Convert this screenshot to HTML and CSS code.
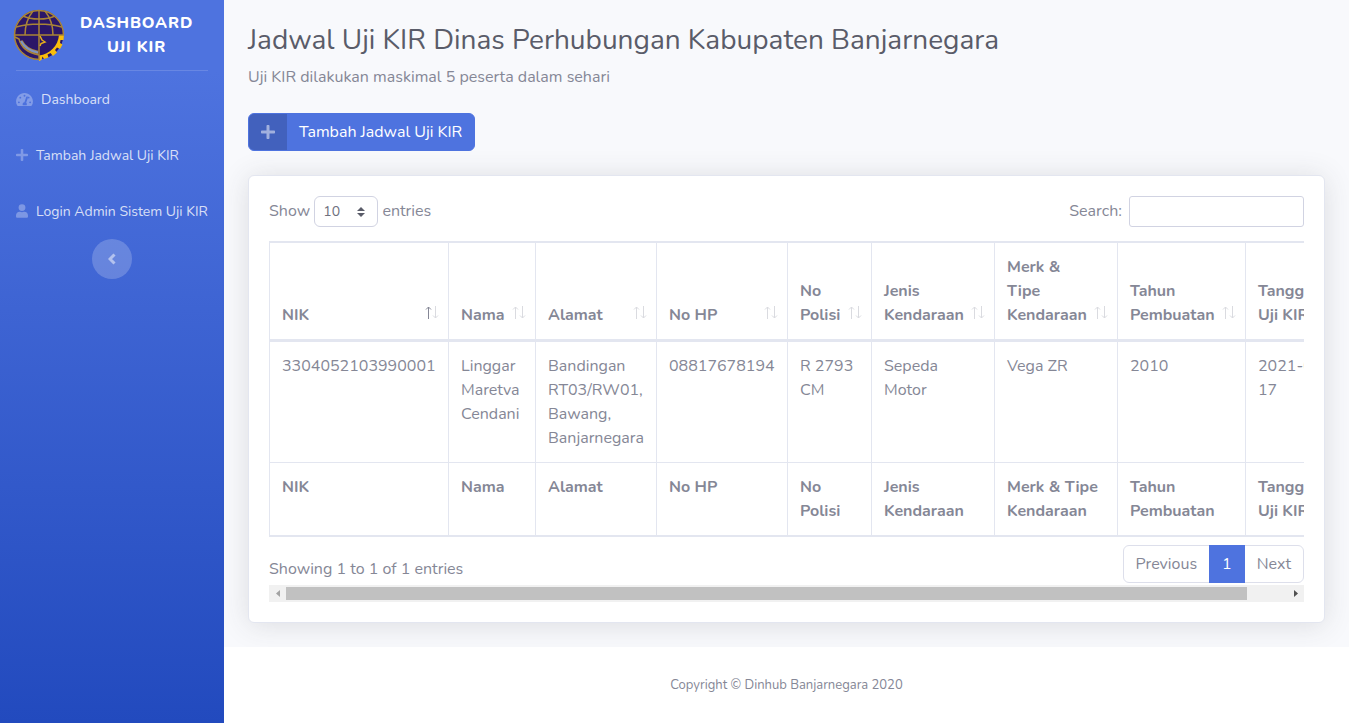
FILE: index.html
```html
<!DOCTYPE html>
<html lang="id">
<head>
<meta charset="utf-8">
<meta name="viewport" content="width=device-width, initial-scale=1">
<title>Dashboard Uji KIR</title>
<link rel="stylesheet" href="styles.css">
</head>
<body>
<svg class="defs" aria-hidden="true">
  <symbol id="plus" viewBox="0 0 448 512"><path d="M416 208H272V64c0-17.670-14.330-32-32-32h-32c-17.670 0-32 14.330-32 32v144H32c-17.670 0-32 14.330-32 32v32c0 17.670 14.330 32 32 32h144v144c0 17.670 14.330 32 32 32h32c17.670 0 32-14.330 32-32V304h144c17.670 0 32-14.330 32-32v-32c0-17.670-14.330-32-32-32z"/></symbol>
</svg>
<div class="wrapper">
  <nav class="sidebar">
    <a class="brand" href="#">
      <svg class="logo" viewBox="0 0 52 52" aria-hidden="true">
        <circle cx="26" cy="25.500" r="24.500" fill="#2b1667"/>
        <path d="M26 52V46.500C37 45 45 37 46 26H51L50.500 31L47.500 31L47 34L49.500 35.500L47 40L44 38.500L42 41L44 43.500L40 47L37.500 44L34.500 45.500L35.500 48.500L31 50L29.500 47.500L28.500 51Z" fill="#f9bd0b"/>
        <g fill="none" stroke="#a98436" stroke-width="1.500">
          <path d="M1.500 26A24.500 24.500 0 0 1 50.500 26M1.500 26A24.500 24.500 0 0 0 26 50.500"/>
          <path d="M1 26H51M26 1V51M12 26C12 16 16 7 20 2M40 26C40 16 36 7 32 2M10 7C18 11 34 11 42 7M3 18C17 14 35 14 49 18"/>
          <path d="M2 28L6 30C8 38 15 44 26 46"/>
        </g>
        <path d="M8 32C11 38 17 42 25 43.500" fill="none" stroke="#ad8337" stroke-width="3.500"/>
        <path d="M8 32C11 38 17 42 25 43.500" fill="none" stroke="#7c93c4" stroke-width="2"/>
        <path d="M27 27L29 31L32 33L28 34.500L27 37" fill="none" stroke="#e5ad1c" stroke-width="1.500"/>
      </svg>
      <span class="brand-text">DASHBOARD UJI KIR</span>
    </a>
    <hr class="divider">
    <ul class="menu">
      <li><a href="#"><svg class="gauge" viewBox="0 0 576 512" aria-hidden="true"><path fill-rule="evenodd" d="M288 32C129 32 0 161 0 320c0 53 14 102 39 145 6 9 16 15 27 15h444c11 0 21-6 27-15 25-43 39-92 39-145C576 161 447 32 288 32zm0 64a32 32 0 1 1 0 64 32 32 0 0 1 0-64zM96 384a32 32 0 1 1 0-64 32 32 0 0 1 0 64zm48-160a32 32 0 1 1 0-64 32 32 0 0 1 0 64zm247-67a24 24 0 0 1 15 30l-61 184c14 12 23 29 23 45 0 12-3 22-9 32H233c-6-10-9-20-9-32 0-35 29-64 62-64l61-184c5-13 31-15 44-11zm9 50a32 32 0 1 1 28 17c-12 0-22-7-28-17zM480 384a32 32 0 1 1 0-64 32 32 0 0 1 0 64z"/></svg>Dashboard</a></li>
      <li><a href="#"><svg viewBox="0 0 448 512" aria-hidden="true"><use href="#plus"/></svg>Tambah Jadwal Uji KIR</a></li>
      <li><a href="#"><svg viewBox="0 0 448 512" aria-hidden="true"><path d="M224 256a128 128 0 1 0 0-256 128 128 0 0 0 0 256zm90 32h-17a174 174 0 0 1-146 0h-17C60 288 0 348 0 422v42c0 27 21 48 48 48h352c27 0 48-21 48-48v-42c0-74-60-134-134-134z"/></svg>Login Admin Sistem Uji KIR</a></li>
    </ul>
    <button class="toggle" type="button" aria-label="Ciutkan menu"><svg viewBox="0 0 8 12" aria-hidden="true"><path d="M6.500 1.500L2 6L6.500 10.500" fill="none" stroke="currentColor" stroke-width="3"/></svg></button>
  </nav>
  <div class="page">
    <main>
      <h1>Jadwal Uji KIR Dinas Perhubungan Kabupaten Banjarnegara</h1>
      <p class="lead">Uji KIR dilakukan maskimal 5 peserta dalam sehari</p>
      <a class="add" href="#"><span class="add-icon"><svg viewBox="0 0 448 512" aria-hidden="true"><use href="#plus"/></svg></span><span class="add-text">Tambah Jadwal Uji KIR</span></a>
      <section class="card">
        <div class="scroller">
          <div class="tools">
            <label>Show <select><option>10</option><option>25</option><option>50</option><option>100</option></select> entries</label>
            <label class="search">Search: <input type="search"></label>
          </div>
          <table>
            <colgroup><col class="c-nik"><col class="c-nama"><col class="c-alamat"><col class="c-hp"><col class="c-polisi"><col class="c-jenis"><col class="c-merk"><col class="c-tahun"><col class="c-tanggal"></colgroup>
            <thead><tr>
              <th class="sorted"><div>NIK<svg viewBox="0 0 14 13"><path class="up" d="M3.500 13V1M1 3.500L3.500 1L6 3.500"/><path d="M10.500 0V12M8 9.500L10.500 12L13 9.500"/></svg></div></th>
              <th><div>Nama<svg viewBox="0 0 14 13"><path d="M3.500 13V1M1 3.500L3.500 1L6 3.500M10.500 0V12M8 9.500L10.500 12L13 9.500"/></svg></div></th>
              <th><div>Alamat<svg viewBox="0 0 14 13"><path d="M3.500 13V1M1 3.500L3.500 1L6 3.500M10.500 0V12M8 9.500L10.500 12L13 9.500"/></svg></div></th>
              <th><div>No HP<svg viewBox="0 0 14 13"><path d="M3.500 13V1M1 3.500L3.500 1L6 3.500M10.500 0V12M8 9.500L10.500 12L13 9.500"/></svg></div></th>
              <th><div>No Polisi<svg viewBox="0 0 14 13"><path d="M3.500 13V1M1 3.500L3.500 1L6 3.500M10.500 0V12M8 9.500L10.500 12L13 9.500"/></svg></div></th>
              <th><div>Jenis Kendaraan<svg viewBox="0 0 14 13"><path d="M3.500 13V1M1 3.500L3.500 1L6 3.500M10.500 0V12M8 9.500L10.500 12L13 9.500"/></svg></div></th>
              <th><div>Merk &amp; Tipe Kendaraan<svg viewBox="0 0 14 13"><path d="M3.500 13V1M1 3.500L3.500 1L6 3.500M10.500 0V12M8 9.500L10.500 12L13 9.500"/></svg></div></th>
              <th><div>Tahun Pembuatan<svg viewBox="0 0 14 13"><path d="M3.500 13V1M1 3.500L3.500 1L6 3.500M10.500 0V12M8 9.500L10.500 12L13 9.500"/></svg></div></th>
              <th><div>Tanggal Uji KIR<svg viewBox="0 0 14 13"><path d="M3.500 13V1M1 3.500L3.500 1L6 3.500M10.500 0V12M8 9.500L10.500 12L13 9.500"/></svg></div></th>
            </tr></thead>
            <tbody><tr>
              <td>3304052103990001</td><td>Linggar Maretva Cendani</td><td>Bandingan RT03/RW01, Bawang, Banjarnegara</td><td>08817678194</td><td>R 2793 CM</td><td>Sepeda Motor</td><td>Vega ZR</td><td>2010</td><td>2021-08-17</td>
            </tr></tbody>
            <tfoot><tr>
              <th>NIK</th><th>Nama</th><th>Alamat</th><th>No HP</th><th>No Polisi</th><th>Jenis Kendaraan</th><th>Merk &amp; Tipe Kendaraan</th><th>Tahun Pembuatan</th><th>Tanggal Uji KIR</th>
            </tr></tfoot>
          </table>
          <div class="summary">
            <span>Showing 1 to 1 of 1 entries</span>
            <div class="pager"><a href="#">Previous</a><a class="current" href="#">1</a><a href="#">Next</a></div>
          </div>
        </div>
        <div class="scrollbar" aria-hidden="true">
          <svg class="back" viewBox="0 0 17 17"><path d="M11 5V12L7 8.500Z"/></svg>
          <div class="track"><div class="thumb"></div></div>
          <svg viewBox="0 0 17 17"><path d="M7 5V12L11 8.500Z"/></svg>
        </div>
      </section>
    </main>
    <footer>Copyright © Dinhub Banjarnegara 2020</footer>
  </div>
</div>
</body>
</html>
```
FILE: styles.css
```css
*, *::before, *::after { box-sizing: border-box; }
body {
  margin: 0;
  font: 400 16px/24px Nunito, Lato, "Open Sans", sans-serif;
  color: #858796;
  background: #fff;
}
a { text-decoration: none; color: inherit; }
svg { fill: currentColor; }
.defs { position: absolute; width: 0; height: 0; }
.wrapper { display: flex; min-height: 100vh; }

.sidebar {
  flex: 0 0 224px;
  display: flex;
  flex-direction: column;
  align-items: stretch;
  color: #fff;
  background: linear-gradient(180deg, #4e73df 10%, #224abe 100%);
}
.brand {
  display: flex;
  align-items: center;
  height: 70px;
  padding: 0 16px 0 13px;
  font-weight: 800;
  text-align: center;
}
.logo { flex: none; width: 52px; height: 52px; }
.brand-text { flex: 1; padding: 0 14px; letter-spacing: 0.8px; }
.divider { width: 192px; margin: 0 16px; border: 0; border-top: 1px solid rgba(255, 255, 255, 0.15); }
.menu { list-style: none; margin: 0; padding: 0; }
.menu a {
  display: flex;
  align-items: center;
  gap: 8px;
  padding: 17px 16px 15px;
  font-size: 14px;
  white-space: nowrap;
  color: rgba(255, 255, 255, 0.8);
}
.menu svg { flex: none; width: 12px; height: 14px; margin-bottom: 2px; color: rgba(255, 255, 255, 0.3); }
.menu .gauge { width: 17px; height: 15px; }
.toggle {
  align-self: center;
  display: grid;
  place-items: center;
  width: 40px;
  height: 40px;
  padding: 0;
  border: 0;
  border-radius: 50%;
  color: rgba(255, 255, 255, 0.5);
  background: rgba(255, 255, 255, 0.2);
}
.toggle svg { width: 8px; height: 12px; }

.page { flex: 1; min-width: 0; display: flex; flex-direction: column; background: #f8f9fc; }
main { flex: 1; padding: 24px; }
h1 { margin: 0 0 8px; font-size: 28px; line-height: 33px; font-weight: 400; color: #5a5c69; }
.lead { margin: 0 0 24px; }
.add {
  display: inline-flex;
  vertical-align: top;
  border: 1px solid #4e73df;
  border-radius: 6px;
  overflow: hidden;
  color: #fff;
  background: #4e73df;
}
.add-icon { display: flex; align-items: center; padding: 0 12px; color: rgba(255, 255, 255, 0.5); background: rgba(0, 0, 0, 0.15); }
.add-icon svg { width: 14px; height: 16px; }
.add-text { padding: 6px 12px; }
.card {
  margin-top: 24px;
  padding: 20px;
  border: 1px solid #e3e6f0;
  border-radius: 6px;
  background: #fff;
  box-shadow: 0 2px 28px rgba(58, 59, 69, 0.15);
}
.scroller { overflow-x: auto; scrollbar-width: none; }
.scrollbar { display: flex; height: 17px; color: #505050; background: #f1f1f1; }
.scrollbar svg { flex: none; width: 17px; height: 17px; }
.scrollbar .back { color: #a3a3a3; }
.track { flex: 1; padding: 2px 0; }
.thumb { width: 96%; height: 13px; background: #c1c1c1; }
.tools, .summary { display: flex; justify-content: space-between; }
select, input {
  height: 31px;
  border: 1px solid #d1d3e2;
  color: #6e707e;
  font: 14px/21px Nunito, Lato, "Open Sans", sans-serif;
}
select {
  appearance: none;
  width: 64px;
  padding: 4px 8px;
  border-radius: 6px;
  background: #fff url("data:image/svg+xml,%3Csvg xmlns='http://www.w3.org/2000/svg' viewBox='0 0 4 5'%3E%3Cpath fill='%235a5c69' d='M2 0L0 2h4zm0 5L0 3h4z'/%3E%3C/svg%3E") no-repeat right 12px center / 8px 10px;
}
input { width: 175px; margin-left: 3px; padding: 4px 8px; border-radius: 3px; background: #fff; }
table {
  width: 100%;
  min-width: 1080px;
  margin: 14px 0 8px;
  table-layout: fixed;
  border: 1px solid #e3e6f0;
  border-spacing: 0;
  text-align: left;
}
.c-nik { width: 179px; }
.c-nama { width: 87px; }
.c-alamat { width: 121px; }
.c-hp { width: 131px; }
.c-polisi { width: 84px; }
.c-jenis, .c-merk { width: 123px; }
.c-tahun { width: 128px; }
th, td { padding: 12px; border: 1px solid #e3e6f0; border-left: 0; vertical-align: top; }
th { font-weight: 700; }
td { border-bottom: 0; }
thead th { padding-right: 9px; border-bottom-width: 2px; vertical-align: bottom; }
thead div { display: flex; justify-content: space-between; align-items: flex-end; gap: 6px; }
thead svg { flex: none; width: 14px; height: 13px; margin-bottom: 8px; fill: none; stroke: currentColor; color: #dadbe0; }
.up { color: #858796; stroke: currentColor; }
.summary { align-items: flex-start; padding-bottom: 2px; }
.summary > span { padding-top: 12px; }
.pager { display: flex; border: 1px solid #dddfeb; border-radius: 6px; }
.pager a { padding: 6px 12px; }
.pager .current { margin: -1px 0; padding: 7px 13px; color: #fff; background: #4e73df; }
footer { padding: 32px 24px; font-size: 13px; line-height: 12px; text-align: center; background: #fff; }
```
